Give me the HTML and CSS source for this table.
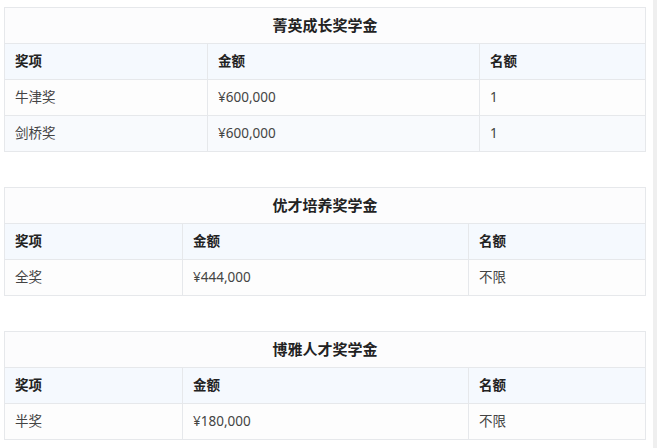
FILE: index.html
```html
<!DOCTYPE html>
<html lang="zh">
<head>
<meta charset="utf-8">
<link rel="stylesheet" href="styles.css">
</head>
<body>
<div class="page">
  <main class="content">
    <table class="award award-a">
      <colgroup><col class="c1"><col class="c2"><col class="c3"></colgroup>
      <thead>
        <tr><th class="title" colspan="3">菁英成长奖学金</th></tr>
        <tr class="head"><th>奖项</th><th>金额</th><th>名额</th></tr>
      </thead>
      <tbody>
        <tr class="odd"><td>牛津奖</td><td>¥600,000</td><td>1</td></tr>
        <tr class="even"><td>剑桥奖</td><td>¥600,000</td><td>1</td></tr>
      </tbody>
    </table>
    <table class="award award-b">
      <colgroup><col class="c1"><col class="c2"><col class="c3"></colgroup>
      <thead>
        <tr><th class="title" colspan="3">优才培养奖学金</th></tr>
        <tr class="head"><th>奖项</th><th>金额</th><th>名额</th></tr>
      </thead>
      <tbody>
        <tr class="odd"><td>全奖</td><td>¥444,000</td><td>不限</td></tr>
      </tbody>
    </table>
    <table class="award award-b">
      <colgroup><col class="c1"><col class="c2"><col class="c3"></colgroup>
      <thead>
        <tr><th class="title" colspan="3">博雅人才奖学金</th></tr>
        <tr class="head"><th>奖项</th><th>金额</th><th>名额</th></tr>
      </thead>
      <tbody>
        <tr class="odd"><td>半奖</td><td>¥180,000</td><td>不限</td></tr>
      </tbody>
    </table>
  </main>
  <div class="scrollbar"></div>
</div>
</body>
</html>
```
FILE: styles.css
```css
html, body {
  margin: 0;
  padding: 0;
  background: #ffffff;
}
body {
  font-family: "Noto Sans", "Noto Sans CJK SC", sans-serif;
  color: #333;
}
.page {
  display: flex;
  height: 448px;
  overflow: hidden;
}
.content {
  width: 641px;
  padding: 7px 0 0 4px;
}
.scrollbar {
  margin-left: auto;
  width: 4px;
  background: #efefef;
}
.award {
  width: 641px;
  border-collapse: collapse;
  table-layout: fixed;
  margin-bottom: 35px;
  font-size: 13.5px;
}
.award th, .award td {
  border: 1px solid #e6e8eb;
  height: 36px;
  padding: 0 0 0 10px;
  text-align: left;
  box-sizing: border-box;
  line-height: 1;
}
.award-a .c1 { width: 203px; }
.award-a .c2 { width: 272px; }
.award-a .c3 { width: 166px; }
.award-b .c1 { width: 178px; }
.award-b .c2 { width: 286px; }
.award-b .c3 { width: 177px; }
.award th.title {
  text-align: center;
  padding: 0;
  font-size: 15px;
  font-weight: 700;
  color: #222;
  background: #fcfcfd;
}
.head th {
  font-weight: 700;
  color: #222;
  background: #f5f9fe;
}
.odd td {
  background: #fdfdfd;
  color: #444;
}
.even td {
  background: #f8fafd;
  color: #444;
}
```
